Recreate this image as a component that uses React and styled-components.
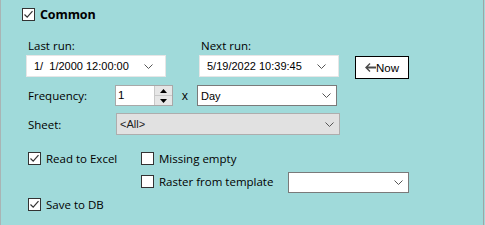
import React from 'react';
import styled, { createGlobalStyle } from 'styled-components';

const Global = createGlobalStyle`
  html, body { margin: 0; padding: 0; background: #a0dada; }
  body { font-family: "Open Sans", "Noto Sans", sans-serif; }
`

const Panel = styled.div`
  box-sizing: border-box;
  width: 484px;
  height: 225px;
  background: #a0dada;
  border-left: 1px solid #a9b4b4;
  border-right: 1px solid #9ea6a6;
  padding: 7px 0 0 21px;
  color: #000;
  font-size: 11.5px;
`
const Header = styled.label`
  display: flex;
  align-items: center;
  gap: 5px;
  height: 14px;
`
const Title = styled.span`
  font-weight: 700;
  font-size: 12.5px;
  letter-spacing: -0.1px;
`
const Box = styled.span`
  box-sizing: border-box;
  width: 13px;
  height: 13px;
  flex: none;
  display: flex;
  align-items: center;
  justify-content: center;
  background: #fff;
  border: 1px solid #333;
`
const RunRow = styled.div`
  display: flex;
  align-items: flex-end;
  margin-top: 17px;
  padding-left: 4px;
`
const Field = styled.div`
  display: flex;
  flex-direction: column;
  width: ${p => p.w}px;
  margin-right: ${p => p.mr || 0}px;
`
const Caption = styled.span`
  height: 16px;
  line-height: 16px;
  padding-left: 2px;
  margin-bottom: 1px;
`
const Combo = styled.div`
  box-sizing: border-box;
  display: flex;
  align-items: center;
  width: ${p => p.w}px;
  height: ${p => p.h || 21}px;
  background: ${p => (p.disabled ? '#e1e1e1' : '#fff')};
  border: 1px solid ${p => (p.light ? '#e6e6e6' : p.disabled ? '#adadad' : '#7a7a7a')};
  padding: 0 ${p => p.pr || 5}px 0 ${p => p.pl || 3}px;
  font-family: "Liberation Sans", Arial, sans-serif;
  font-size: 11px;
  color: ${p => (p.disabled ? '#222' : '#000')};
`
const ComboText = styled.span`
  flex: 1;
  white-space: pre;
`
const NowButton = styled.button`
  box-sizing: border-box;
  display: flex;
  align-items: center;
  gap: 0;
  width: 54px;
  height: 23px;
  margin-bottom: -2px;
  padding: 0 0 0 9px;
  background: #fff;
  border: 1px solid #000;
  font-family: "Liberation Sans", Arial, sans-serif;
  font-size: 11.5px;
  color: #000;
`
const Row = styled.div`
  display: flex;
  align-items: center;
  height: ${p => p.h}px;
  margin-top: ${p => p.mt}px;
  padding-left: 6px;
`
const Label = styled.span`
  width: ${p => p.w}px;
  flex: none;
`
const Spin = styled.div`
  box-sizing: border-box;
  display: flex;
  width: 58px;
  height: 21px;
  background: #fff;
  border: 1px solid #a8a8a8;
`
const SpinText = styled.span`
  flex: 1;
  padding-left: 2px;
  line-height: 18px;
  font-family: "Liberation Sans", Arial, sans-serif;
  font-size: 11.5px;
`
const SpinButtons = styled.div`
  display: flex;
  flex-direction: column;
  width: 17px;
  border-left: 1px solid #c8c8c8;
`
const SpinButton = styled.span`
  flex: 1;
  display: flex;
  align-items: center;
  justify-content: center;
  background: #e6e6e6;
  border-bottom: ${p => (p.top ? '1px solid #c8c8c8' : 'none')};
`
const Times = styled.span`
  width: 24px;
  text-align: center;
  font-size: 12px;
`
const Checks = styled.div`
  display: grid;
  grid-template-columns: 113px 147px auto;
  grid-auto-rows: 23px;
  align-items: center;
  margin-top: 12px;
  padding-left: 6px;
`
const Check = styled.label`
  display: flex;
  align-items: center;
  gap: 5px;
  grid-column: ${p => p.col};
  grid-row: ${p => p.row};
  white-space: nowrap;
`
const RasterCell = styled.div`
  grid-column: 3;
  grid-row: 2;
  padding-top: 2px;
`

const Tick = () => (
  <svg width="11" height="11" viewBox="0 0 11 11">
    <path d="M1.5 5.5 L4.2 8.2 L9.5 2.2" fill="none" stroke="#333" strokeWidth="1.2" />
  </svg>
)

const Chevron = () => (
  <svg width="9" height="5" viewBox="0 0 9 5">
    <path d="M0.5 0.5 L4.5 4.5 L8.5 0.5" fill="none" stroke="#555" strokeWidth="1" />
  </svg>
)

const CheckBox = ({ checked }) => <Box>{checked && <Tick />}</Box>

const App = () => (
  <>
    <Global />
    <Panel>
      <Header>
        <CheckBox checked />
        <Title>Common</Title>
      </Header>

      <RunRow>
        <Field w={140} mr={33}>
          <Caption>Last run:</Caption>
          <Combo w={140} h={22} light pl={7} pr={12}>
            <ComboText>{'1/  1/2000 12:00:00'}</ComboText>
            <Chevron />
          </Combo>
        </Field>
        <Field w={140} mr={16}>
          <Caption>Next run:</Caption>
          <Combo w={140} h={22} light pl={7} pr={12}>
            <ComboText>5/19/2022 10:39:45</ComboText>
            <Chevron />
          </Combo>
        </Field>
        <NowButton>
          <svg width="11" height="9" viewBox="0 0 11 9">
            <path d="M0 4.5 L4.5 0 L5.5 1 L3 3.5 H11 V5.5 H3 L5.5 8 L4.5 9 Z" fill="#4a4a4a" />
          </svg>
          Now
        </NowButton>
      </RunRow>

      <Row h={21} mt={8}>
        <Label w={90 - 3}>Frequency:</Label>
        <Spin>
          <SpinText>1</SpinText>
          <SpinButtons>
            <SpinButton top>
              <svg width="7" height="4" viewBox="0 0 7 4"><path d="M0 4 L3.5 0 L7 4 Z" fill="#000" /></svg>
            </SpinButton>
            <SpinButton>
              <svg width="7" height="4" viewBox="0 0 7 4"><path d="M0 0 L3.5 4 L7 0 Z" fill="#000" /></svg>
            </SpinButton>
          </SpinButtons>
        </Spin>
        <Times>x</Times>
        <Combo w={140} pl={3}>
          <ComboText>Day</ComboText>
          <Chevron />
        </Combo>
      </Row>

      <Row h={22} mt={7}>
        <Label w={88}>Sheet:</Label>
        <Combo w={224} h={22} disabled pl={3}>
          <ComboText>{'<All>'}</ComboText>
          <Chevron />
        </Combo>
      </Row>

      <Checks>
        <Check col={1} row={1}><CheckBox checked />Read to Excel</Check>
        <Check col={2} row={1}><CheckBox />Missing empty</Check>
        <Check col={2} row={2}><CheckBox />Raster from template</Check>
        <RasterCell>
          <Combo w={121}>
            <ComboText />
            <Chevron />
          </Combo>
        </RasterCell>
        <Check col={1} row={3}><CheckBox checked />Save to DB</Check>
      </Checks>
    </Panel>
  </>
)

export default App;
